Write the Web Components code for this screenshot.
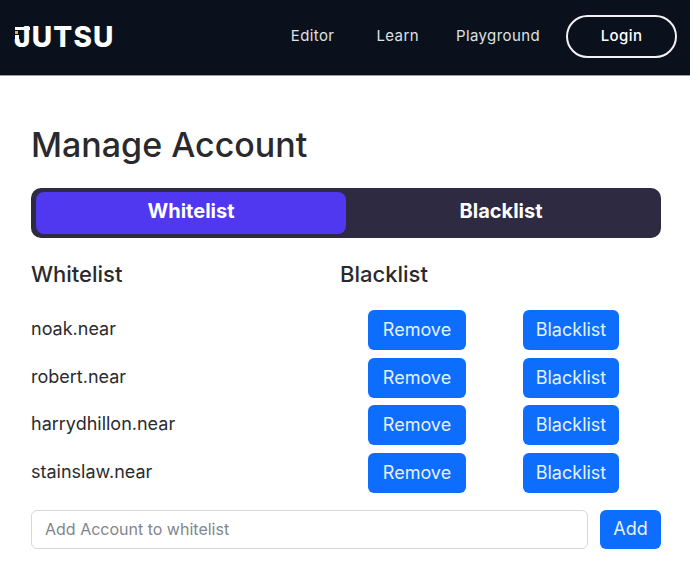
<!DOCTYPE html>
<html lang="en">
<head>
<meta charset="utf-8">
<title>Manage Account</title>
<style>
    html, body { margin: 0; padding: 0; background: #fff; }
    body { font-family: Inter, "Open Sans", sans-serif; color: #212529; }
</style>
</head>
<body>
<jutsu-nav></jutsu-nav>
<manage-account>
    <account-row name="noak.near"></account-row>
    <account-row name="robert.near"></account-row>
    <account-row name="harrydhillon.near"></account-row>
    <account-row name="stainslaw.near"></account-row>
</manage-account>

<script>
// Top navigation bar
class JutsuNav extends HTMLElement {
    constructor() {
        super();
        this.attachShadow({ mode: 'open' });
        this.shadowRoot.innerHTML = `
            <style>
                :host { display: block; }
                nav {
                    height: 76px;
                    box-sizing: border-box;
                    background: #0b111c;
                    border-bottom: 1px solid #9aa0a8;
                    display: flex;
                    align-items: center;
                    padding: 0 13px 2px 14px;
                }
                .logo {
                    position: relative;
                    font: 800 28px/1 Inter, sans-serif;
                    letter-spacing: 1.2px;
                    color: #fff;
                }
                /* the J of the logo has a top bar and a short left stem with a gold dot */
                .logo i, .logo u, .logo b { position: absolute; }
                .logo i { left: 1px; top: 4px; width: 15px; height: 3px; background: #fff; }
                .logo u { left: 1px; top: 12px; width: 4px; height: 7px; background: #fff; }
                .logo b { left: 1px; top: 8px; width: 3px; height: 3px; background: #d9b45a; }
                .links {
                    margin-left: auto;
                    display: flex;
                    align-items: center;
                    font: 400 15px Inter, sans-serif;
                    letter-spacing: 0.4px;
                    color: #dfe1e4;
                }
                .links a { padding-bottom: 3px; }
                .links a.editor { margin-right: 42px; }
                .links a.learn { margin-right: 37px; }
                .links a.play { margin-right: 26px; }
                .login {
                    box-sizing: border-box;
                    width: 111px;
                    height: 43px;
                    border: 2px solid #f2f2f5;
                    border-radius: 22px;
                    display: flex;
                    align-items: center;
                    justify-content: center;
                    padding-bottom: 2px;
                    font-weight: 500;
                    color: #fff;
                }
            </style>
            <nav>
                <div class="logo"><i></i><u></u><b></b>JUTSU</div>
                <div class="links">
                    <a class="editor">Editor</a>
                    <a class="learn">Learn</a>
                    <a class="play">Playground</a>
                    <div class="login">Login</div>
                </div>
            </nav>
        `;
    }
}

// Blue bootstrap style button
class BlueButton extends HTMLElement {
    constructor() {
        super();
        this.attachShadow({ mode: 'open' });
        this.shadowRoot.innerHTML = `
            <style>
                :host {
                    display: inline-flex;
                    align-items: center;
                    justify-content: center;
                    box-sizing: border-box;
                    height: 40px;
                    padding-bottom: 1px;
                    background: #0d6efd;
                    border-radius: 6px;
                    color: #e6f0ff;
                    font: 400 18px Inter, sans-serif;
                }
            </style>
            <slot></slot>
        `;
    }
}

class AccountRow extends HTMLElement {
    constructor() {
        super();
        this.attachShadow({ mode: 'open' });
    }

    connectedCallback() {
        const name = this.getAttribute('name') || '';
        this.shadowRoot.innerHTML = `
            <style>
                :host {
                    display: grid;
                    grid-template-columns: 309px 154px 154px;
                    align-items: center;
                    height: 47.6px;
                }
                .name { font: 400 18px Inter, sans-serif; color: #2b2b2f; padding-bottom: 3px; }
                .cell { display: flex; justify-content: center; }
                .remove { width: 98px; }
                .black { width: 96px; }
            </style>
            <div class="name">${name}</div>
            <div class="cell"><blue-button class="remove">Remove</blue-button></div>
            <div class="cell"><blue-button class="black">Blacklist</blue-button></div>
        `;
    }
}

// Page body with tabs, list and add form
class ManageAccount extends HTMLElement {
    constructor() {
        super();
        this.attachShadow({ mode: 'open' });
        this.shadowRoot.innerHTML = `
            <style>
                :host { display: block; padding: 50px 29px 0 31px; }
                h1 {
                    margin: 0;
                    font: 500 34px/38px Inter, sans-serif;
                    color: #2a2a2e;
                }
                .tabs {
                    margin-top: 24px;
                    height: 50px;
                    box-sizing: border-box;
                    padding: 4px 5px;
                    background: #2d2a42;
                    border-radius: 10px;
                    display: grid;
                    grid-template-columns: 1fr 1fr;
                    font: 700 20px Inter, sans-serif;
                    color: #fff;
                }
                .tabs div {
                    display: flex;
                    align-items: center;
                    justify-content: center;
                    border-radius: 8px;
                    padding-bottom: 4px;
                    box-sizing: border-box;
                }
                .tabs .on { background: #4f38ef; }
                .heads {
                    display: grid;
                    grid-template-columns: 309px 1fr;
                    margin: 21px 0 17.4px;
                    font: 500 22px/30px Inter, sans-serif;
                    color: #2a2a2e;
                }
                .add {
                    display: flex;
                    gap: 12px;
                    margin-top: 13px;
                    height: 39px;
                }
                .input {
                    flex: 1;
                    box-sizing: border-box;
                    border: 1px solid #d5d8dd;
                    border-radius: 6px;
                    display: flex;
                    align-items: center;
                    padding: 0 13px 1px;
                    font: 400 16px Inter, sans-serif;
                    color: #82868c;
                }
                blue-button { width: 61px; height: 39px; }
            </style>
            <h1>Manage Account</h1>
            <div class="tabs"><div class="on">Whitelist</div><div>Blacklist</div></div>
            <div class="heads"><div>Whitelist</div><div>Blacklist</div></div>
            <slot></slot>
            <div class="add">
                <div class="input">Add Account to whitelist</div>
                <blue-button>Add</blue-button>
            </div>
        `;
    }
}

customElements.define('jutsu-nav', JutsuNav);
customElements.define('blue-button', BlueButton);
customElements.define('account-row', AccountRow);
customElements.define('manage-account', ManageAccount);
</script>
</body>
</html>
